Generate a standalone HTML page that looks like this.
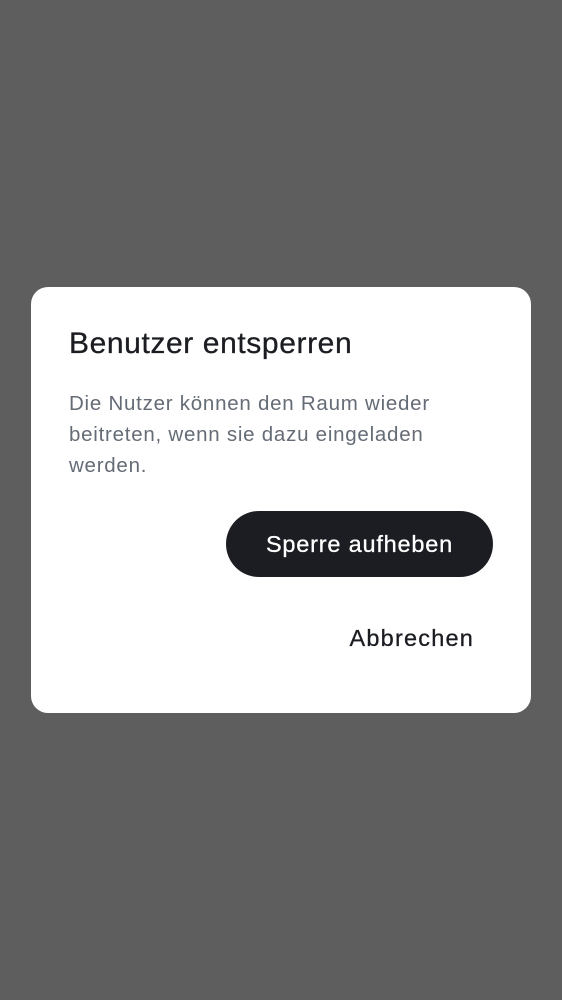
<!DOCTYPE html>
<html><head><meta charset="utf-8"><style>
html,body{margin:0;padding:0;width:562px;height:1000px;background:#5e5e5e;overflow:hidden;font-family:"Liberation Sans",sans-serif}
.card{position:absolute;left:31px;top:287px;width:500px;height:426px;background:#fff;border-radius:17px}
.t{position:absolute;left:38px;top:40px;font-size:30px;letter-spacing:0.6px;color:#1b1d22;white-space:nowrap;-webkit-text-stroke:0.3px #1b1d22}
.b{position:absolute;left:38px;top:101px;width:440px;font-size:20.5px;letter-spacing:0.75px;line-height:31px;color:#656c76;white-space:nowrap}
.btn{position:absolute;left:195px;top:224px;width:267px;height:66px;border-radius:33px;background:#1b1d22;color:#fff;font-size:23.5px;letter-spacing:0.8px;display:flex;align-items:center;justify-content:center;-webkit-text-stroke:0.3px #fff}
.c{position:absolute;right:57px;top:338px;font-size:23.5px;letter-spacing:1.2px;color:#1b1d22;-webkit-text-stroke:0.3px #1b1d22}
</style></head><body>
<div class="card">
<div class="t">Benutzer entsperren</div>
<div class="b">Die Nutzer können den Raum wieder<br>beitreten, wenn sie dazu eingeladen<br>werden.</div>
<div class="btn">Sperre aufheben</div>
<div class="c">Abbrechen</div>
</div>
</body></html>
